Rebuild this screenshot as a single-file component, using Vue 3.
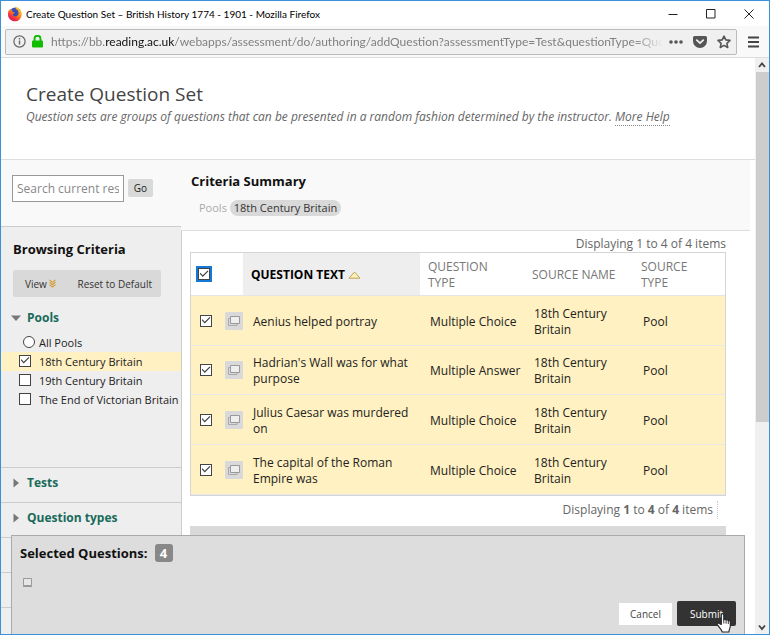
<script setup>
import { ref } from 'vue'

const pools = ref([
  { id: 'p18', name: '18th Century Britain', checked: true },
  { id: 'p19', name: '19th Century Britain', checked: false },
  { id: 'pvic', name: 'The End of Victorian Britain', checked: false },
])

const questions = ref([
  { id: 1, text: 'Aenius helped portray', type: 'Multiple Choice', checked: true },
  { id: 2, text: "Hadrian's Wall was for what purpose", type: 'Multiple Answer', checked: true },
  { id: 3, text: 'Julius Caesar was murdered on', type: 'Multiple Choice', checked: true },
  { id: 4, text: 'The capital of the Roman Empire was', type: 'Multiple Choice', checked: true },
])

const allChecked = ref(true)
</script>

<template>
  <div class="window">
    <header class="titlebar">
      <svg class="logo" viewBox="0 0 16 16" width="16" height="16">
        <defs>
          <linearGradient id="fox" x1="0.9" y1="0" x2="0.2" y2="1">
            <stop offset="0" stop-color="#ffe226" />
            <stop offset="0.45" stop-color="#ff8a16" />
            <stop offset="0.75" stop-color="#f5313f" />
            <stop offset="1" stop-color="#d3146f" />
          </linearGradient>
        </defs>
        <circle cx="8.2" cy="7.6" r="6" fill="#3a4fb5" />
        <path d="M8 .8c2 .2 3 1 4 2 2 1.500 3 4 2.600 6.400C14 13 11.200 15.400 7.800 15.300 4 15.200 1 12.300 1 8.500 1 6.500 1.400 5 2.300 3.200l.6 1.600C3.600 4 4.500 3.600 5.500 3.900c-.6.8-.5 1.500.1 2l2 .5c.2.8-1.400 1.100-1.700 2-.2 1.200 1 2 2.200 2 1.800 0 3.400-1.300 3.500-3.200C11.700 5 10.500 3.500 8.600 3 9.200 2 8.700 1.300 8 .8z" fill="url(#fox)" />
      </svg>
      <span class="title">Create Question Set – British History 1774 - 1901 - Mozilla Firefox</span>
      <div class="controls">
        <button type="button" aria-label="Minimize"><svg width="10" height="10" viewBox="0 0 10 10"><path d="M0.500 5.500h9" stroke="#222" fill="none" /></svg></button>
        <button type="button" aria-label="Maximize"><svg width="10" height="10" viewBox="0 0 10 10"><path d="M.5.5h8.500v8.500H.5z" stroke="#222" fill="none" /></svg></button>
        <button type="button" aria-label="Close"><svg width="10" height="10" viewBox="0 0 10 10"><path d="M.5.5l9 9M9.500.5l-9 9" stroke="#222" fill="none" /></svg></button>
      </div>
    </header>

    <div class="toolbar">
      <div class="urlbar">
        <svg width="13" height="13" viewBox="0 0 13 13"><circle cx="6.500" cy="6.500" r="5.600" fill="none" stroke="#666" stroke-width="1.200" /><path d="M6.500 5.600v4M6.500 3v1.500" stroke="#666" stroke-width="1.400" /></svg>
        <svg width="11" height="13" viewBox="0 0 11 13"><path d="M2.500 6V3.700a3 3 0 0 1 6 0V6" fill="none" stroke="#12bc00" stroke-width="1.900" /><rect y="5.500" width="11" height="7" rx="1" fill="#12bc00" /></svg>
        <div class="url">https://bb.<b>reading.ac.uk</b>/webapps/assessment/do/authoring/addQuestion?assessmentType=Test&amp;questionType=Que</div>
        <svg width="14" height="14" viewBox="0 0 14 14"><g fill="#555"><circle cx="2" cy="7" r="1.800" /><circle cx="7" cy="7" r="1.800" /><circle cx="12" cy="7" r="1.800" /></g></svg>
        <svg class="pocket" width="14" height="14" viewBox="0 0 14 14"><path d="M1.500 1h11A1.500 1.500 0 0 1 14 2.500V6A7 7 0 0 1 0 6V2.500A1.500 1.500 0 0 1 1.500 1z" fill="#555" /><path d="M3.800 5.200L7 8.200l3.200-3" fill="none" stroke="#f0f0f0" stroke-width="1.800" stroke-linecap="round" stroke-linejoin="round" /></svg>
        <svg width="14" height="14" viewBox="0 0 14 14"><path d="M7 1.100l1.800 3.800 4.200.5-3.100 2.900.8 4.200L7 10.400l-3.700 2.100.8-4.200L1 5.400l4.200-.5z" fill="none" stroke="#555" stroke-width="1.600" stroke-linejoin="round" /></svg>
      </div>
      <button type="button" class="menu" aria-label="Menu"><svg width="11" height="12" viewBox="0 0 11 12"><path d="M0 1.500h11M0 6h11M0 10.500h11" stroke="#444" stroke-width="1.800" /></svg></button>
    </div>

    <div class="viewport">
      <main class="page">
        <section class="intro">
          <h1>Create Question Set</h1>
          <p>Question sets are groups of questions that can be presented in a random fashion determined by the instructor. <a href="#">More Help</a></p>
        </section>

        <div class="columns">
          <aside class="sidebar">
            <form class="search" @submit.prevent>
              <input type="text" placeholder="Search current res" aria-label="Search current results">
              <button type="submit">Go</button>
            </form>
            <div class="criteria">
              <h2>Browsing Criteria</h2>
              <div class="actions">
                <button type="button">View <svg width="7" height="9" viewBox="0 0 7 9"><path d="M.5.8l3 2.500 3-2.500M.5 3.200l3 2.500 3-2.500M.5 5.600l3 2.500 3-2.500" fill="none" stroke="#d39a2c" stroke-width="1.100" /></svg></button>
                <button type="button">Reset to Default</button>
              </div>
              <h3><svg width="10" height="6" viewBox="0 0 10 6"><path d="M0 .5h10L5 6z" fill="#777" /></svg>Pools</h3>
              <label class="option radio"><input type="radio" name="pools"><span>All Pools</span></label>
              <label v-for="p in pools" :key="p.id" class="option" :class="{ on: p.checked }"><input v-model="p.checked" type="checkbox"><span>{{ p.name }}</span></label>
            </div>
            <h3 class="fold"><svg width="10" height="10" viewBox="0 0 10 10"><path d="M2.500.5v9L8 5z" fill="#777" /></svg>Tests</h3>
            <h3 class="fold"><svg width="10" height="10" viewBox="0 0 10 10"><path d="M2.500.5v9L8 5z" fill="#777" /></svg>Question types</h3>
            <div class="fold"></div>
            <div class="fold"></div>
            <div class="fold"></div>
          </aside>

          <section class="results">
            <div class="summary">
              <h2>Criteria Summary</h2>
              <p>Pools <span>18th Century Britain</span></p>
            </div>
            <div class="list">
              <p class="count">Displaying 1 to 4 of 4 items</p>
              <table>
                <colgroup><col class="c-check"><col><col class="c-type"><col class="c-source"><col class="c-kind"></colgroup>
                <thead>
                  <tr>
                    <th class="pick"><input v-model="allChecked" class="focused" type="checkbox" aria-label="Select all"></th>
                    <th class="sorted">QUESTION TEXT <svg width="13" height="8" viewBox="0 0 13 8"><path d="M1 7.200L6.500 1 12 7.200z" fill="#fff0b8" stroke="#bfa35a" stroke-linejoin="round" /></svg></th>
                    <th>QUESTION TYPE</th>
                    <th>SOURCE NAME</th>
                    <th>SOURCE TYPE</th>
                  </tr>
                </thead>
                <tbody>
                  <tr v-for="q in questions" :key="q.id">
                    <td class="pick">
                      <div class="pair">
                        <input v-model="q.checked" type="checkbox" :aria-label="q.text">
                        <button type="button" class="preview" aria-label="Preview"><svg width="12" height="10" viewBox="0 0 12 10"><path d="M2.500 2.500h-2v7h8.500v-2" fill="none" stroke="#aaa" /><path d="M2.500.500h9v7h-9z" fill="#eee" stroke="#999" /></svg></button>
                      </div>
                    </td>
                    <td>{{ q.text }}</td>
                    <td>{{ q.type }}</td>
                    <td>18th Century Britain</td>
                    <td>Pool</td>
                  </tr>
                </tbody>
              </table>
              <p class="paging"><span>Displaying <b>1</b> to <b>4</b> of <b>4</b> items</span></p>
              <div class="footbar"></div>
            </div>
          </section>
        </div>

        <section class="selected">
          <h2>Selected Questions: <span>4</span></h2>
          <button type="button" class="tray" aria-label="Expand"><svg width="9" height="9" viewBox="0 0 9 9"><path d="M.5.500h8v7h-8z" fill="#e6e6e6" stroke="#999" /><path d="M0 8.500h9" stroke="#999" /></svg></button>
          <div class="buttons">
            <button type="button">Cancel</button>
            <button type="button" class="submit">Submit</button>
          </div>
          <svg class="cursor" width="16" height="20" viewBox="0 0 16 20"><path d="M5.300 11.500V2.200c0-1.900 2.500-1.900 2.500 0v4.600c.4-1 2.100-.8 2.300.4.600-.9 2-.5 2.200.6.700-.6 2 0 2 1.100v4.200c0 2.100-1.300 3.100-1.400 5.900H6.200c-.2-2.500-3.500-4.600-4.900-7.400-.6-1.300 1-2.100 2-1.100z" fill="#fff" stroke="#222" stroke-width="1.100" stroke-linejoin="round" /><path d="M7.800 6.800v3.700M10.100 7.200v3.500M12.300 8v3" stroke="#222" stroke-width=".9" /></svg>
        </section>
      </main>

      <div class="scrollbar">
        <svg width="14" height="14" viewBox="0 0 14 14"><path d="M4 9l3-3.500L10 9" fill="none" stroke="#444" stroke-width="1.800" /></svg>
        <div class="thumb"></div>
        <svg width="14" height="14" viewBox="0 0 14 14"><path d="M4 5.500L7 9l3-3.500" fill="none" stroke="#444" stroke-width="1.800" /></svg>
      </div>
    </div>
  </div>
</template>

<style>
body { margin: 0; }
</style>

<style scoped>
* { box-sizing: border-box; }
h1, h2, h3, p { margin: 0; }
button, input { font: inherit; color: inherit; margin: 0; }
button { border: 0; padding: 0; background: none; }
svg { flex: none; }

.window {
  height: 100vh;
  display: flex;
  flex-direction: column;
  border: 1px solid #3a90d9;
  background: #fff;
  color: #222;
  font: 12px/16px "Open Sans", "Noto Sans", sans-serif;
  overflow: hidden;
}
.titlebar { display: flex; align-items: center; height: 25px; flex: none; padding: 0 1px 0 6px; gap: 3px; }
.title { flex: 1; font-family: Lato, "Open Sans", sans-serif; font-size: 10px; color: #000; white-space: nowrap; }
.controls { display: flex; }
.controls button { width: 38px; height: 24px; display: grid; place-items: center; }
.toolbar { display: flex; align-items: center; height: 32px; flex: none; padding-left: 4px; background: #f9f9fa; border-bottom: 1px solid #ddd; }
.urlbar { flex: 1; min-width: 0; display: flex; align-items: center; height: 26px; padding: 0 5px 0 7px; gap: 6px; border: 1px solid #bbb; border-radius: 2px; background: #f0f0f0; }
.url { flex: 1; min-width: 0; overflow: hidden; white-space: nowrap; font-family: Lato, "Open Sans", sans-serif; font-size: 12px; color: #808080; margin: 0 0 0 2px; -webkit-mask-image: linear-gradient(to left, transparent, #000 30px); mask-image: linear-gradient(to left, transparent, #000 30px); }
.url b { font-weight: 400; color: #111; }
.pocket { margin: 0 4px; }
.menu { width: 32px; height: 26px; display: grid; place-items: center; }

.viewport { flex: 1; min-height: 0; display: flex; }
.page { flex: 1; min-width: 0; display: flex; flex-direction: column; position: relative; overflow: hidden; }
.scrollbar { width: 14px; display: flex; flex-direction: column; background: #f0f0f0; }
.scrollbar .thumb { height: 350px; background: #cdcdcd; margin-bottom: auto; margin-left: 1px; }

.intro { flex: none; height: 102px; padding: 22px 25px 0; border-bottom: 1px solid #ddd; }
h1 { font-size: 19px; line-height: 28px; font-weight: 400; color: #444; }
.intro p { font-style: italic; color: #666; line-height: 18px; white-space: nowrap; }
.intro a { color: #666; text-decoration: none; border-bottom: 1px dotted #888; }

.columns { flex: 1; min-height: 0; display: grid; grid-template-columns: 181px 1fr; padding-right: 5px; }
.sidebar { background: linear-gradient(#f9f9f9 66px, #eee 66px); border-right: 1px solid #ccc; overflow: hidden; }
.search { display: flex; align-items: center; height: 67px; padding: 0 11px 10px; gap: 4px; border-bottom: 1px solid #ccc; }
.search input { width: 112px; height: 27px; padding: 0 4px; border: 1px solid #999; border-radius: 0; background: #fff; font-size: 12px; }
.search input::placeholder { color: #888; opacity: 1; }
.search button { width: 25px; height: 18px; background: #d9d9d9; border-radius: 2px; font-size: 10px; line-height: 18px; }
h2 { font-size: 13px; line-height: 18px; font-weight: 700; color: #111; }
.criteria { height: 240px; padding-top: 13px; }
.criteria h2 { padding-left: 12px; }
.actions { display: flex; width: 148px; margin: 12px 0 0 12px; background: #d9d9d9; border-radius: 2px; }
.actions button { height: 27px; padding-left: 12px; font-size: 10px; color: #333; white-space: nowrap; }
.actions button + button { padding-left: 21px; }
h3 { display: flex; align-items: center; gap: 6px; font-size: 12px; line-height: 18px; font-weight: 700; color: #186b5a; padding-left: 10px; }
.criteria h3 { margin: 12px 0 6px; }
.option { display: flex; align-items: center; gap: 8px; height: 19px; padding-left: 18px; font-size: 11px; white-space: nowrap; }
.option input { margin-bottom: 2px; }
.option.radio { padding-left: 22px; gap: 4px; }
.option.on { background: #fff1c1; }
.fold { height: 35px; border-top: 1px solid #ccc; padding-bottom: 4px; }

input[type="checkbox"] { appearance: none; flex: none; width: 12px; height: 12px; border: 1px solid #444; background: #fff; display: grid; place-items: center; }
input[type="checkbox"]:checked::after { content: ""; width: 9px; height: 8px; background: #444; clip-path: polygon(0 45%, 10% 35%, 36% 65%, 90% 5%, 100% 15%, 36% 87%); }
input[type="radio"] { appearance: none; flex: none; width: 12px; height: 12px; border: 1px solid #444; border-radius: 50%; background: #fff; }

.results { min-width: 0; background: #fff; }
.summary { height: 71px; margin-left: -1px; padding: 12px 9px 0 10px; background: #f9f9f9; border-bottom: 1px solid #ddd; }
.summary p { margin: 10px 0 0 8px; font-size: 11px; line-height: 16px; color: #aaa; }
.summary span { display: inline-block; padding: 0 4px; border-radius: 8px; background: #d9d9d9; color: #333; }
.list { padding: 5px 24px 0 8px; }
.count { text-align: right; color: #666; }
table { width: 100%; table-layout: fixed; border-collapse: separate; border-spacing: 0; border: 1px solid #d5d5d5; }
.c-check { width: 52px; }
.c-type { width: 104px; }
.c-source { width: 109px; }
.c-kind { width: 92px; }
th { height: 43px; padding: 2px 30px 0 8px; text-align: left; font-weight: 400; color: #777; border-bottom: 1px solid #e5e5e5; white-space: normal; }
th:nth-child(4) { padding-right: 0; }
th.sorted { background: #eee; font-weight: 700; color: #000; padding-right: 0; }
td { height: 49px; padding: 2px 0 0 10px; background: #fff1c1; border-bottom: 1px solid #e8e8e8; vertical-align: middle; }
tbody tr:nth-child(odd) td { height: 50px; }
tbody tr:last-child td { height: 50px; }
td:nth-child(2) { padding-right: 8px; }
th.pick { padding: 0 0 0 7px; }
td.pick { padding: 0 0 0 9px; }
.pair { display: flex; align-items: center; gap: 13px; }
.focused { outline: 2px solid #1478d4; }
.preview { width: 18px; height: 18px; display: grid; place-items: center; background: #d9d9d9; border-radius: 1px; }
.paging { display: flex; justify-content: flex-end; padding: 5px 8px 7px 0; color: #666; }
.paging span { padding-right: 4px; line-height: 18px; border-right: 1px dotted #ccc; }
.footbar { height: 20px; background: #d9d9d9; }

.selected { position: absolute; left: 10px; right: 10px; bottom: 0; height: 99px; padding: 8px 8px 8px 8px; background: #ddd; border: 1px solid #aaa; border-bottom: 0; display: flex; flex-direction: column; }
.selected h2 { display: flex; align-items: center; gap: 7px; }
.selected h2 span { width: 18px; height: 18px; line-height: 18px; border-radius: 3px; background: #888; color: #fff; text-align: center; }
.tray { width: 15px; height: 17px; display: grid; place-items: center; margin-top: 12px; }
.buttons { display: flex; align-items: center; justify-content: flex-end; gap: 5px; margin-top: auto; }
.buttons button { width: 53px; height: 22px; background: #fff; font-size: 10px; color: #444; }
.buttons .submit { width: 59px; height: 25px; border-radius: 2px; background: #333; color: #fff; }
.cursor { position: absolute; right: 12px; bottom: 1px; }
</style>
